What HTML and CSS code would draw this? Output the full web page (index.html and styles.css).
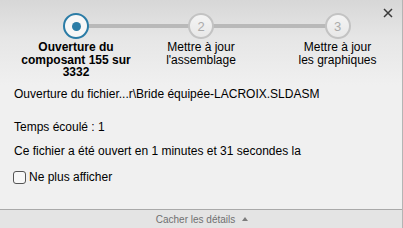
FILE: index.html
```html
<!DOCTYPE html>
<html lang="fr">
<head>
<meta charset="utf-8">
<link rel="stylesheet" href="styles.css">
</head>
<body>
<div class="dialog">
  <header class="steps">
    <div class="track"></div>
    <button class="close" aria-label="Fermer">
      <svg width="10" height="10" viewBox="0 0 10 10"><path d="M1 1 L9 9 M9 1 L1 9" stroke="#3a3a3a" stroke-width="1.5" fill="none"/></svg>
    </button>
    <div class="step active">
      <span class="circle"><span class="dot"></span></span>
      <span class="label bold">Ouverture du<br>composant 155 sur<br>3332</span>
    </div>
    <div class="step">
      <span class="circle">2</span>
      <span class="label">Mettre à jour<br>l'assemblage</span>
    </div>
    <div class="step">
      <span class="circle">3</span>
      <span class="label">Mettre à jour<br>les graphiques</span>
    </div>
  </header>
  <main class="content">
    <p class="line file">Ouverture du fichier...r\Bride équipée-LACROIX.SLDASM</p>
    <p class="line time">Temps écoulé : 1</p>
    <p class="line msg">Ce fichier a été ouvert en 1 minutes et 31 secondes la</p>
    <label class="check"><span class="box"></span>Ne plus afficher</label>
  </main>
  <footer class="details">Cacher les détails <span class="tri"></span></footer>
</div>
</body>
</html>
```
FILE: styles.css
```css
html, body {
  margin: 0;
  padding: 0;
}
body {
  width: 403px;
  height: 228px;
  overflow: hidden;
  background: #f0f0f0;
  font-family: "Liberation Sans", Arial, sans-serif;
  font-size: 12px;
  color: #000;
}
.dialog {
  display: flex;
  flex-direction: column;
  height: 228px;
  border-right: 1px solid #b4b4b4;
  box-sizing: border-box;
}
.steps {
  position: relative;
  display: grid;
  grid-template-columns: 110px 140px 133px;
  padding: 13px 0 0 21px;
  height: 85px;
  box-sizing: border-box;
  background: linear-gradient(#d7d7d7 0%, #e6e6e6 45%, #f0f0f0 100%);
}
.track {
  position: absolute;
  left: 76px;
  top: 24px;
  width: 262px;
  height: 4px;
  background: #b9b9b9;
}
.close {
  position: absolute;
  right: 8px;
  top: 7px;
  width: 12px;
  height: 12px;
  padding: 1px;
  border: 0;
  background: none;
  display: flex;
  align-items: center;
  justify-content: center;
}
.step {
  display: flex;
  flex-direction: column;
  align-items: center;
  position: relative;
}
.circle {
  width: 26px;
  height: 26px;
  box-sizing: border-box;
  border-radius: 50%;
  border: 2.5px solid #c3c3c3;
  background: linear-gradient(#f4f4f4, #e8e8e8);
  display: flex;
  align-items: center;
  justify-content: center;
  color: #ababab;
  font-family: "Liberation Sans", Arial, sans-serif;
  font-size: 13px;
  line-height: 1;
}
.active .circle {
  border-color: #2b7ca6;
  background: #f7f7f7;
}
.dot {
  width: 9px;
  height: 9px;
  border-radius: 50%;
  background: #2b7ca6;
}
.label {
  margin-top: 2px;
  text-align: center;
  white-space: nowrap;
  line-height: 12.5px;
}
.bold {
  font-weight: bold;
}
.content {
  flex: 1;
  padding: 0 0 0 14px;
}
.line {
  margin: 0;
  line-height: 14px;
  white-space: nowrap;
}
.file { margin-top: 2px; }
.time { margin-top: 19px; }
.msg { margin-top: 10px; }
.check {
  display: flex;
  align-items: center;
  gap: 3px;
  margin-top: 12px;
  margin-left: -1px;
}
.box {
  width: 13px;
  height: 13px;
  box-sizing: border-box;
  border: 1px solid #555;
  border-radius: 3px;
  background: #f7f7f7;
}
.details {
  height: 19px;
  box-sizing: border-box;
  border-top: 1px solid #a9a9a9;
  background: #e4e4e4;
  display: flex;
  align-items: center;
  justify-content: center;
  gap: 7px;
  font-size: 10px;
  color: #707070;
  padding-left: 2px;
}
.tri {
  width: 0;
  height: 0;
  border-left: 3.5px solid transparent;
  border-right: 3.5px solid transparent;
  border-bottom: 4px solid #7c7c7c;
}
```
